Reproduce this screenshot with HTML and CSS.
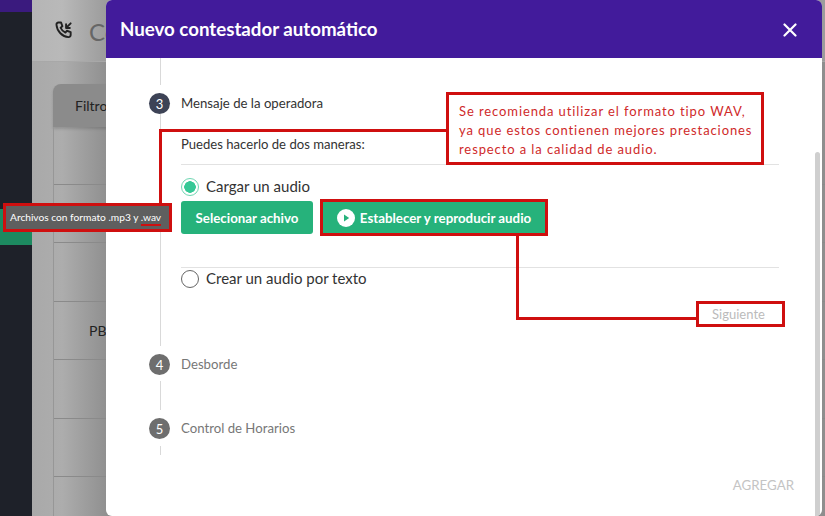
FILE: index.html
```html
<!DOCTYPE html>
<html lang="es">
<head>
<meta charset="utf-8">
<title>Nuevo contestador automático</title>
<link rel="stylesheet" href="styles.css">
</head>
<body>
<div class="page">
  <aside class="sidebar">
    <div class="side-top"></div>
    <div class="side-active"></div>
  </aside>
  <main class="back">
    <div class="back-head">
      <svg class="back-icon" viewBox="0 0 24 24" width="20" height="20" fill="none" stroke="#222" stroke-width="2.3" stroke-linecap="round" stroke-linejoin="round"><path d="M5 3h3.500l1.600 4.600-2.200 1.700c1 2.400 3.200 4.600 5.800 5.800l1.700-2.200 4.600 1.600V18a2.500 2.500 0 0 1-2.700 2.500C10 20 3.600 13.500 3 6a2.500 2.500 0 0 1 2-3z"/><path d="M20 4l-5.500 5.500M14.500 5v4.500H19"/></svg>
      <span class="back-title">Co</span>
    </div>
    <div class="back-tab">Filtro</div>
    <div class="back-table">
      <div class="back-row"></div>
      <div class="back-row"></div>
      <div class="back-row"></div>
      <div class="back-row"><span>PB</span></div>
      <div class="back-row"></div>
      <div class="back-row"></div>
      <div class="back-row"></div>
    </div>
  </main>

  <section class="modal">
    <header class="modal-head">
      <h1>Nuevo contestador automático</h1>
      <svg class="close" viewBox="0 0 14 14" width="14" height="14" stroke="#fff" stroke-width="2.200" stroke-linecap="round"><path d="M1.500 1.500l11 11M12.500 1.500l-11 11"/></svg>
    </header>
    <div class="modal-body">
      <div class="scrollbar"></div>
      <div class="stem stem-top"></div>
      <div class="step">
        <span class="num num-active">3</span>
        <span class="step-label step-label-active">Mensaje de la operadora</span>
      </div>
      <div class="step-content">
        <p class="hint">Puedes hacerlo de dos maneras:</p>
        <div class="option option-first">
          <span class="radio radio-on"></span>
          <span class="option-text">Cargar un audio</span>
        </div>
        <div class="btns">
          <button class="btn btn-file">Selecionar achivo</button>
          <button class="btn btn-play">
            <svg viewBox="0 0 18 18" width="18" height="18"><circle cx="9" cy="9" r="9" fill="#fff"/><path d="M7 5.600l5.200 3.400L7 12.400z" fill="#26b27b"/></svg>
            Establecer y reproducir audio
          </button>
        </div>
        <div class="option option-second">
          <span class="radio"></span>
          <span class="option-text">Crear un audio por texto</span>
        </div>
        <div class="next-row"><button class="next">Siguiente</button></div>
      </div>
      <div class="step step-off">
        <span class="num">4</span>
        <span class="step-label">Desborde</span>
      </div>
      <div class="stem stem-mid"></div>
      <div class="step step-off">
        <span class="num">5</span>
        <span class="step-label">Control de Horarios</span>
      </div>
      <div class="stem stem-end"></div>
      <div class="modal-foot">AGREGAR</div>
    </div>
  </section>

  <div class="note">Se recomienda utilizar el formato tipo WAV,<br>ya que estos contienen mejores prestaciones<br>respecto a la calidad de audio.</div>
  <div class="wire wire-a"></div>
  <div class="wire wire-b"></div>
  <div class="tip">Archivos con formato .mp3 y <span class="tip-mark">.wav</span></div>
  <div class="wire wire-c"></div>
  <div class="wire wire-d"></div>
</div>
</body>
</html>
```

FILE: styles.css
```css
* { box-sizing: border-box; }
html, body { margin: 0; height: 100%; overflow: hidden; }
body { font-family: "Lato", "Open Sans", sans-serif; color: #333; }

.page { position: relative; display: flex; width: 825px; height: 516px; overflow: hidden; }

.sidebar { width: 32px; background: #1e2129; display: flex; flex-direction: column; }
.side-top { height: 12px; background: #3a1a7e; }
.side-active { height: 36px; margin-top: 197px; background: #1d8a60; }

.back { flex: 1; padding-left: 21px; background: linear-gradient(90deg, #a9a9a9 0, #adadad 30px, #909090 74px, #8e8e8e 100%); }
.back-head { height: 62px; margin-left: -21px; padding: 20px 0 0 22px; display: flex; gap: 15px; background: linear-gradient(90deg, #b5b5b5 0, #b9b9b9 30px, #9c9c9c 74px); border-bottom: 1px solid #a8a8a8; }
.back-title { font-size: 24px; color: #666; line-height: 24px; white-space: nowrap; }
.back-tab { width: 60px; height: 43px; margin-top: 22px; padding: 13px 0 0 22px; font-size: 14px; color: #222; background: #8b8b8b; border-radius: 8px 0 0 0; box-shadow: 0 2px 3px rgba(0,0,0,.15); }
.back-table { border-left: 1px solid #979797; }
.back-row { height: 58.400px; border-bottom: 1px solid #8a8a8a; padding: 20px 0 0 35px; font-size: 14px; color: #222; overflow: hidden; }
.back-row:first-child { height: 58px; }

.modal { position: absolute; left: 106px; top: 0; width: 716px; height: 516px; background: #fff; border-radius: 6px; overflow: hidden; }
.modal-head { height: 58px; padding: 0 25px 0 14px; background: #421b9b; color: #fff; display: flex; align-items: center; justify-content: space-between; }
.modal-head h1 { margin: 0; font-size: 18.700px; font-weight: 700; }
.close { margin-top: 2px; }

.modal-body { position: relative; height: 458px; padding: 0 43px; }
.scrollbar { position: absolute; right: 2px; top: 94px; bottom: 0; width: 5px; background: #cfcfcf; border-radius: 3px 3px 0 0; }
.stem { margin-left: 11px; width: 1px; background: #d9d9d9; }
.stem-top { height: 27px; }
.stem-mid { height: 29px; margin-top: 6px; }
.stem-end { height: 9px; margin-top: 7px; }

.step { display: flex; align-items: center; gap: 11px; height: 21px; margin-top: 8px; }
.num { width: 21px; height: 21px; border-radius: 50%; background: #6e6e6e; color: #fff; font-size: 13px; display: flex; align-items: center; justify-content: center; flex: none; }
.num-active { background: #3d4356; }
.step-label { margin-top: -2px; font-size: 13.200px; color: #777; }
.step-label-active { color: #333; }

.step-content { margin: 0 -1px 8px 11px; padding-left: 20px; height: 232px; width: 619px; border-left: 1px solid #d9d9d9; display: flex; flex-direction: column; }
.hint { margin: 0; padding: 22px 0 11px; font-size: 13.100px; line-height: 17px; color: #333; border-bottom: 1px solid #e2e2e2; }
.option { display: flex; align-items: center; gap: 7px; font-size: 15px; color: #333; height: 20px; }
.option-text { margin-top: -2px; }
.option-first { margin-top: 12px; }
.option-second { margin-top: 33px; border-top: 1px solid #e2e2e2; height: 22px; }
.radio { width: 18px; height: 18px; border-radius: 50%; border: 1px solid #666; background: #fff; flex: none; }
.radio-on { border-color: #6fd6b2; background: radial-gradient(circle, #36c896 0 5.500px, #fff 6px); }
.btns { display: flex; gap: 10px; margin-top: 4px; align-items: center; }
.btn { border: 0; background: #26b27b; color: #fff; font: 700 13.300px "Lato", sans-serif; display: flex; align-items: center; justify-content: center; }
.btn-file { width: 132px; height: 33px; border-radius: 3px; }
.btn-play { width: 222px; height: 31px; gap: 5px; outline: 3px solid #cf0f0f; }
.next-row { display: flex; justify-content: flex-end; margin-top: 12px; }
.next { width: 89px; height: 26px; margin-right: -6px; padding: 0 4px 0 0; border: 0; background: none; color: #bbb; font: 13px "Lato", sans-serif; outline: 3px solid #cf0f0f; outline-offset: -3px; }

.modal-foot { position: absolute; right: 28px; bottom: 23px; font-size: 13.300px; color: #c4c4c4; }

.note { position: absolute; left: 446px; top: 92px; width: 318px; height: 73px; padding: 7px 0 0 10px; background: #fff; border: 3px solid #cf0f0f; color: #cf2a2a; font-size: 13px; line-height: 19px; letter-spacing: .9px; white-space: nowrap; }
.tip { position: absolute; left: 3px; top: 203px; width: 169px; height: 29px; padding-left: 4px; background: #5f5f5f; border: 3px solid #cf0f0f; color: #fff; font-size: 10.200px; line-height: 23px; white-space: nowrap; }
.tip-mark { border-bottom: 2px solid #cf0f0f; padding-bottom: 1px; }
.wire { position: absolute; background: #cf0f0f; }
.wire-a { left: 159px; top: 129px; width: 288px; height: 3px; }
.wire-b { left: 159px; top: 129px; width: 3px; height: 75px; }
.wire-c { left: 516px; top: 235px; width: 3px; height: 85px; }
.wire-d { left: 516px; top: 317px; width: 181px; height: 3px; }
```
